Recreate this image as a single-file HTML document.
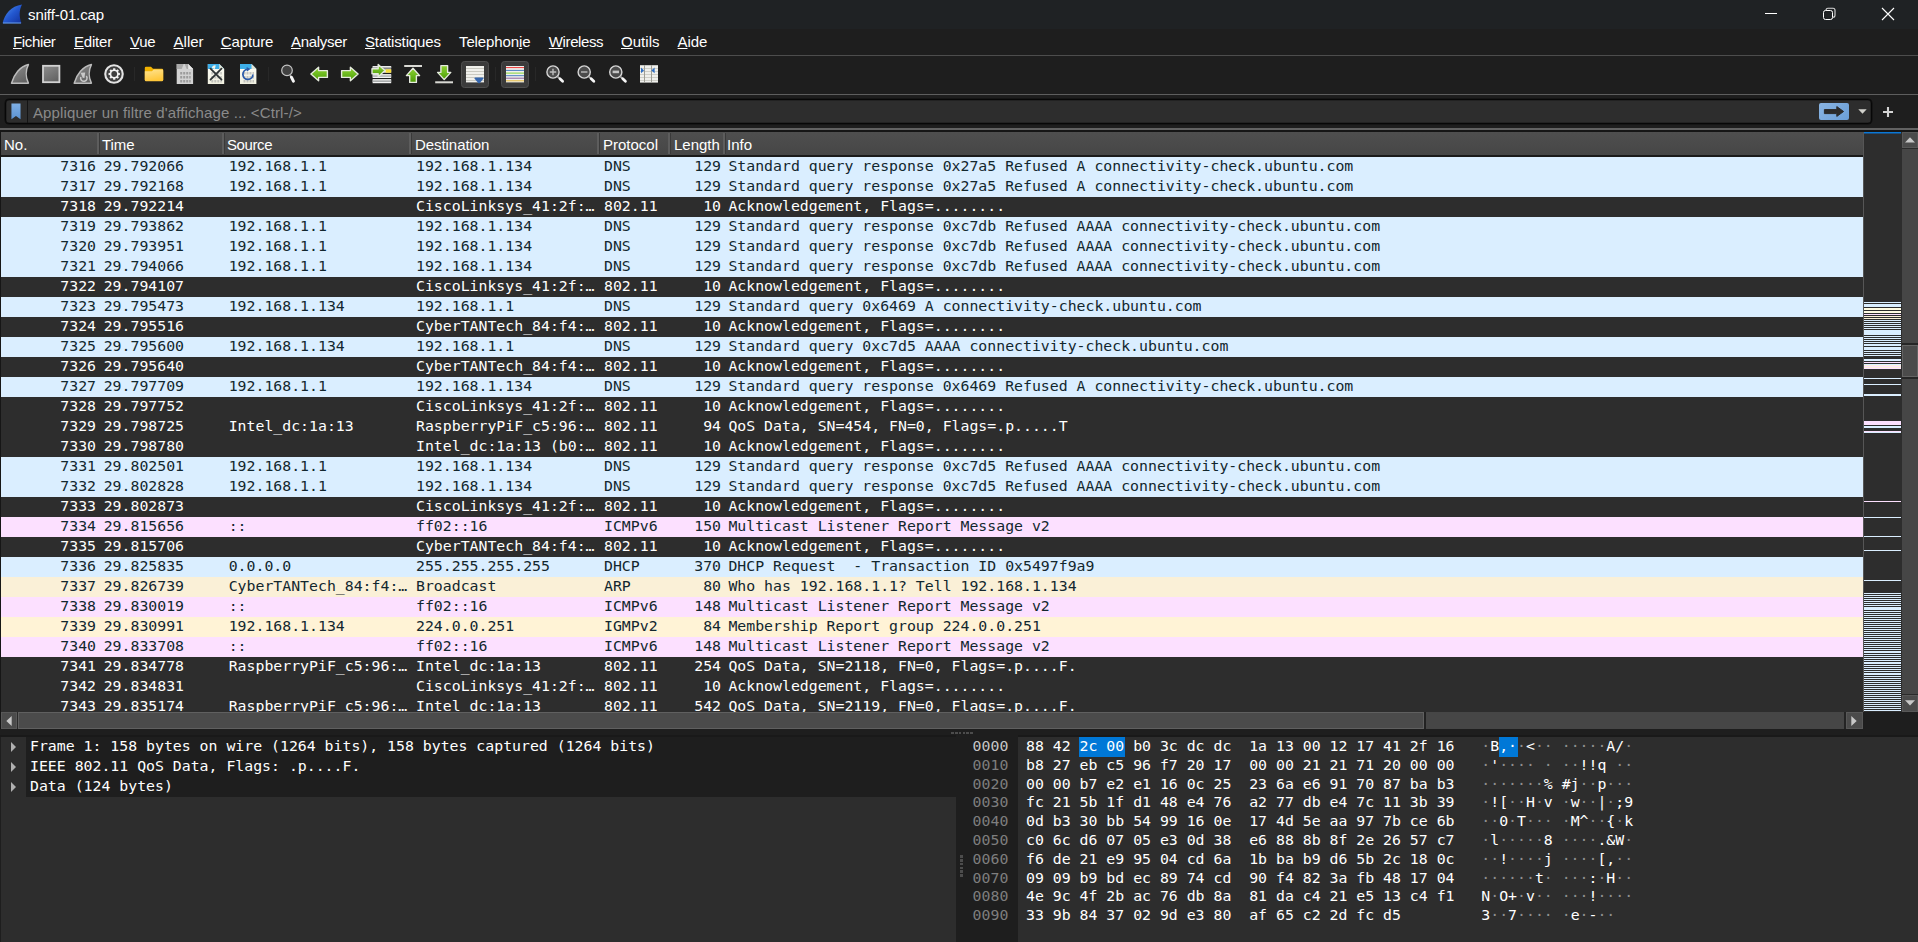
<!DOCTYPE html>
<html lang="fr"><head><meta charset="utf-8"><title>sniff-01.cap</title>
<style>

html,body{margin:0;padding:0;background:#1e1e1e;}
body{width:1918px;height:942px;position:relative;overflow:hidden;font-family:"Liberation Sans", "DejaVu Sans", sans-serif;color:#fff;}
.a{position:absolute;}
.m{font-family:"DejaVu Sans Mono", "Liberation Mono", monospace;font-size:14.83px;white-space:pre;letter-spacing:0;}
.s{font-family:"Liberation Sans", "DejaVu Sans", sans-serif;white-space:pre;}
#title{left:0;top:0;width:1918px;height:29px;background:#1f2224;}
#menubar{left:0;top:29px;width:1918px;height:26px;background:#1e1e1e;}
.mi{position:absolute;top:32px;font-size:15px;line-height:20px;color:#fff;white-space:pre;}
.mi u{text-decoration:underline;text-underline-offset:1px;text-decoration-thickness:1px;}
.hl{position:absolute;left:0;width:1918px;height:1px;}
#hdr{left:1px;top:132px;width:1862px;height:23px;background:linear-gradient(#4f4f4f,#464646);}
.hc{position:absolute;top:136px;font-size:15px;line-height:18px;color:#fff;white-space:pre;}
.hs{position:absolute;top:133px;width:2px;height:21px;background:#5d5d5d;border-right:1px solid #3a3a3a;}
.row{position:absolute;left:0;width:1862px;height:20px;}
.row span{position:absolute;top:-1px;line-height:20px;height:20px;}
.c0{left:0;width:95px;text-align:right;}
.c1{left:102.7px;}
.c2{left:227.7px;}
.c3{left:415px;}
.c4{left:603px;}
.c5{left:669px;width:51px;text-align:right;}
.c6{left:727.4px;}
.tr{position:absolute;left:30px;line-height:20px;height:20px;color:#fff;}
.tri{position:absolute;left:11px;width:0;height:0;border-left:5px solid #b0b0b0;border-top:5px solid transparent;border-bottom:5px solid transparent;}
.hx{position:absolute;left:1026px;line-height:18.8px;height:19px;color:#fff;}
.ho{position:absolute;left:972.6px;line-height:18.8px;height:19px;color:#7e7e7e;}
.dim{color:#8f8f8f;}

</style></head><body>
<div class="a" id="title"></div>
<svg class="a" style="left:2px;top:3px" width="22" height="22" viewBox="0 0 22 22"><defs><linearGradient id="fin" x1="0" y1="0" x2="1" y2="1"><stop offset="0" stop-color="#5b9df0"/><stop offset="0.5" stop-color="#2358d0"/><stop offset="1" stop-color="#12309a"/></linearGradient></defs><path d="M0.6 20.2 C2.6 11 9 3 20 1.4 C17 7 17 14 19.6 20.2 Z" fill="url(#fin)"/><path d="M1 20 L19 20" stroke="#6aa2ee" stroke-width="1"/></svg>
<div class="a s" style="left:28px;top:4.5px;font-size:15px;line-height:20px;letter-spacing:-0.1px;color:#fff;">sniff-01.cap</div>
<svg class="a" style="left:1750px;top:0" width="168" height="29" viewBox="0 0 168 29"><path d="M15 13.5 H27" stroke="#fff" stroke-width="1"/><rect x="73.5" y="10.5" width="9" height="9" rx="2" fill="none" stroke="#fff" stroke-width="1"/><path d="M76 10.5 V10.2 Q76 8.2 78 8.2 H83 Q85 8.2 85 10.2 V15.2 Q85 17.2 83 17.2 H82.5" fill="none" stroke="#d8d8d8" stroke-width="1.1"/><path d="M132 8 L144 20 M144 8 L132 20" stroke="#fff" stroke-width="1.1"/></svg>
<div class="a" id="menubar"></div>
<div class="mi" style="left:13px;letter-spacing:-0.36px"><u>F</u>ichier</div>
<div class="mi" style="left:74px;letter-spacing:-0.21px"><u>E</u>diter</div>
<div class="mi" style="left:130px;letter-spacing:-0.25px"><u>V</u>ue</div>
<div class="mi" style="left:173.5px;letter-spacing:0.02px"><u>A</u>ller</div>
<div class="mi" style="left:220.7px;letter-spacing:-0.11px"><u>C</u>apture</div>
<div class="mi" style="left:291px;letter-spacing:-0.31px"><u>A</u>nalyser</div>
<div class="mi" style="left:365px;letter-spacing:-0.15px"><u>S</u>tatistiques</div>
<div class="mi" style="left:459px;letter-spacing:-0.12px">Telephon<u>i</u>e</div>
<div class="mi" style="left:548.8px;letter-spacing:-0.39px"><u>W</u>ireless</div>
<div class="mi" style="left:621px;letter-spacing:0.04px"><u>O</u>utils</div>
<div class="mi" style="left:677.6px;letter-spacing:-0.11px"><u>A</u>ide</div>
<div class="hl" style="top:55px;background:#4d4d4d"></div>
<svg class="a" style="left:0;top:56px" width="700" height="38" viewBox="0 0 700 38">
<defs>
<linearGradient id="gG" x1="0" y1="0" x2="0.6" y2="1"><stop offset="0" stop-color="#8e8e8e"/><stop offset="1" stop-color="#646464"/></linearGradient>
<linearGradient id="gGreen" x1="0" y1="0" x2="0" y2="1"><stop offset="0" stop-color="#8fd032"/><stop offset="0.5" stop-color="#6cba1e"/><stop offset="1" stop-color="#4e9a06"/></linearGradient>
<linearGradient id="gFold" x1="0" y1="0" x2="0.3" y2="1"><stop offset="0" stop-color="#ffe391"/><stop offset="1" stop-color="#ffc73a"/></linearGradient>
<linearGradient id="gDoc" x1="0" y1="0" x2="0" y2="1"><stop offset="0" stop-color="#fefef8"/><stop offset="1" stop-color="#f0f0e0"/></linearGradient>
<g id="lens"><circle cx="0" cy="0" r="6.1" fill="#4b4b4b" stroke="#d6d6d6" stroke-width="1.4"/><path d="M4.4 4.4 L7 6.8" stroke="#a8a8a8" stroke-width="1.8"/><path d="M7 6.8 L9.6 9.2" stroke="#f6f6f6" stroke-width="2.8" stroke-linecap="round"/></g>
<g id="grid" fill="#9c9c9c"><rect x="3.5" y="8" width="2" height="2.5"/><rect x="6.5" y="8" width="2" height="2.5"/><rect x="9.5" y="8" width="2" height="2.5"/><rect x="12.5" y="8" width="1.5" height="2.5"/>
<rect x="3.5" y="12" width="2" height="2.5"/><rect x="6.5" y="12" width="2" height="2.5"/><rect x="9.5" y="12" width="2" height="2.5"/><rect x="12.5" y="12" width="1.5" height="2.5"/>
<rect x="3.5" y="16" width="2" height="2.5"/><rect x="6.5" y="16" width="2" height="2.5"/><rect x="9.5" y="16" width="2" height="2.5"/><rect x="12.5" y="16" width="1.5" height="2.5"/></g>
</defs>
<!-- start capture fin -->
<path d="M11.5 27.2 C14 18.5 20 10.5 28.4 8.6 C25.6 14 25.6 21.5 28.4 27.2 Z" fill="url(#gG)" stroke="#bcbcbc" stroke-width="1.5" stroke-linejoin="round"/>
<!-- stop square -->
<rect x="43" y="9.8" width="16.4" height="16.4" fill="url(#gG)" stroke="#d2d2d2" stroke-width="1.8"/>
<!-- restart fin -->
<path d="M74.2 27.2 C76.7 18.5 82.7 10.5 91.4 8.6 C88.6 14 88.6 21.5 91.4 27.2 Z" fill="url(#gG)" stroke="#bcbcbc" stroke-width="1.5" stroke-linejoin="round"/>
<path d="M86.3 20.1 A3.2 3.2 0 1 1 80.84 21.06" fill="none" stroke="#c9c9c9" stroke-width="1.5"/>
<path d="M80.6 16.8 L85.2 16.6 L84.4 22 L82.7 21.8 Z" fill="#c9c9c9"/>
<!-- options gear -->
<circle cx="114" cy="18" r="8.75" fill="#3e3e3e" stroke="#e4e4e4" stroke-width="2.1"/>
<g transform="translate(114.2 18)" fill="#f2f2f2">
<circle r="4.5"/>
<g id="teeth"><rect x="-1.1" y="-5.7" width="2.2" height="11.4"/><rect x="-5.7" y="-1.1" width="11.4" height="2.2"/></g>
<use href="#teeth" transform="rotate(45)"/>
<circle r="2.9" fill="#3e3e3e"/>
</g>
<!-- separators -->
<g stroke="#282828" stroke-width="1"><path d="M134.5 11 V25"/><path d="M268.5 11 V25"/><path d="M495.5 11 V25"/><path d="M535.5 11 V25"/></g>
<!-- folder -->
<path d="M144.8 12 Q144.8 10.8 146 10.8 H151 L153 12.8 H162 Q163.2 12.8 163.2 14 V24 H144.8 Z" fill="#f2b200"/>
<path d="M144.8 15.2 H152 L153.6 13.6 H162 Q163.2 13.6 163.2 14.8 V24 Q163.2 25.2 162 25.2 H146 Q144.8 25.2 144.8 24 Z" fill="url(#gFold)"/>
<!-- gray document -->
<g transform="translate(176.7 8)">
<path d="M0 0 H11.5 L16.4 4.9 V20 H0 Z" fill="#d2d2d2"/>
<path d="M0 0 H7 L5 5 H0 Z" fill="#a9a9a9"/><path d="M8 0 H11.5 L16.4 4.9 H10 Z" fill="#a9a9a9"/>
<path d="M11.5 0 L16.4 4.9 H11.5 Z" fill="#e8e8e8"/>
<use href="#grid"/>
</g>
<!-- document close -->
<g transform="translate(207.8 8)">
<path d="M0 0 H11.5 L16.4 4.9 V20 H0 Z" fill="url(#gDoc)"/>
<path d="M0 0 H11.5 L16.4 4.9 H0 Z" fill="#3daee9"/>
<path d="M11.5 0 L16.4 4.9 H11.5 Z" fill="#e4e4d4"/>
<path d="M4 4 A3 3 0 0 1 8 1.5 L7 5 Z" fill="#f4f4e8"/>
<g opacity="0.55"><use href="#grid"/></g>
<path d="M2.7 4.6 L13.7 15.6 M13.7 4.6 L2.7 15.6" stroke="#2e3436" stroke-width="1.8" stroke-linecap="round"/>
</g>
<!-- document reload -->
<g transform="translate(240 8)">
<path d="M0 0 H11.5 L16.4 4.9 V20 H0 Z" fill="url(#gDoc)"/>
<path d="M0 0 H11.5 L16.4 4.9 H0 Z" fill="#3daee9"/>
<path d="M11.5 0 L16.4 4.9 H11.5 Z" fill="#e4e4d4"/>
<g opacity="0.55"><use href="#grid"/></g>
<path d="M7.6 5.4 A5 5 0 1 0 12.9 10.4" fill="none" stroke="#2a5aa8" stroke-width="1.8"/>
<path d="M6.6 3 L10.4 5 L7 7.4 Z" fill="#2a5aa8"/>
</g>
<!-- find -->
<circle cx="287" cy="14.4" r="5.3" fill="#414141" stroke="#c6c6c6" stroke-width="1.2"/>
<path d="M290 19 L291.4 21.4" stroke="#9a9a9a" stroke-width="1.6"/><path d="M291.4 21.2 L293.4 25.2" stroke="#f6f6f6" stroke-width="3" stroke-linecap="round"/>
<!-- back arrow -->
<path d="M310.9 18 L318.6 11.2 V14.6 H327.4 V21.4 H318.6 V24.8 Z" fill="url(#gGreen)" stroke="#e6ebde" stroke-width="1.4" stroke-linejoin="round"/>
<!-- forward arrow -->
<path d="M358.1 18 L350.4 11.2 V14.6 H341.6 V21.4 H350.4 V24.8 Z" fill="url(#gGreen)" stroke="#e6ebde" stroke-width="1.4" stroke-linejoin="round"/>
<!-- go to packet -->
<g>
<g fill="#f4f4f4"><rect x="372.6" y="10" width="18.6" height="2.5"/><rect x="372.6" y="13.3" width="18.6" height="3.4"/><rect x="372.6" y="18.1" width="18.6" height="3.9"/><rect x="372.6" y="23.1" width="18.6" height="4.1"/></g>
<g fill="#a2a6a6"><rect x="372.6" y="10.9" width="18.6" height="0.9"/><rect x="372.6" y="19.4" width="18.6" height="1.3"/><rect x="372.6" y="24.4" width="18.6" height="1.5"/></g>
<rect x="385.6" y="13.3" width="5.6" height="3.4" fill="#f7dc3a"/>
<path d="M372 12.7 H378.2 V8.5 L384.9 14.6 L378.2 20.7 V17.7 H372 Z" fill="url(#gGreen)" stroke="#e4e9dc" stroke-width="1.4" stroke-linejoin="round"/>
</g>
<!-- first packet -->
<rect x="404.2" y="9" width="17.8" height="2" fill="#d9d9d4"/>
<path d="M413 12.2 L419.6 19.6 H416.4 V26.4 H409.7 V19.6 H406.4 Z" fill="url(#gGreen)" stroke="#e6ebde" stroke-width="1.4" stroke-linejoin="round"/>
<!-- last packet -->
<path d="M444.2 23.6 L450.8 16.4 H447.6 V9.6 H440.9 V16.4 H437.6 Z" fill="url(#gGreen)" stroke="#e6ebde" stroke-width="1.4" stroke-linejoin="round"/>
<rect x="435.2" y="25.3" width="17.8" height="2" fill="#d9d9d4"/>
<!-- autoscroll (checked) -->
<rect x="461.5" y="5.5" width="27" height="26" rx="3" fill="#3b3b3b" stroke="#4f4f4f" stroke-width="1"/>
<rect x="466" y="10" width="18" height="16.4" fill="#f0f0ec"/>
<g stroke="#c9c9c1" stroke-width="1"><path d="M466 12.5 H484"/><path d="M466 15.5 H484"/><path d="M466 18.5 H484"/><path d="M466 21.5 H484"/><path d="M466 24.5 H484"/></g>
<path d="M474.4 22.4 Q474.4 21.6 475.4 21.6 H482.6 Q483.6 21.6 483.6 22.4 L479.6 27.2 H478.4 Z" fill="#3566ad"/>
<!-- colorize (checked) -->
<rect x="501.5" y="5.5" width="27" height="26" rx="3" fill="#3b3b3b" stroke="#4f4f4f" stroke-width="1"/>
<rect x="506" y="10" width="18" height="16.4" fill="#f0f0ec"/>
<g stroke-width="1"><path d="M506 11.6 H524" stroke="#ef3a3a"/><path d="M506 14.4 H524" stroke="#4a7fc0"/><path d="M506 17.1 H524" stroke="#82d53a"/><path d="M506 19.7 H524" stroke="#4a7fc0"/><path d="M506 22.2 H524" stroke="#8a62a0"/><path d="M506 24.8 H524" stroke="#e6b93c"/></g>
<!-- zoom in -->
<use href="#lens" x="553" y="16"/>
<path d="M549.8 16 H556.2 M553 12.8 V19.2" stroke="#bdbdbd" stroke-width="1.4"/>
<!-- zoom out -->
<use href="#lens" x="584.2" y="16"/>
<path d="M581 16 H587.4" stroke="#bdbdbd" stroke-width="1.4"/>
<!-- zoom 1:1 -->
<use href="#lens" x="615.8" y="16"/>
<rect x="612.6" y="14.6" width="6.4" height="2.6" fill="#c4c4c4"/>
<!-- resize columns -->
<rect x="640" y="9.2" width="18" height="17.4" fill="#f0f0ec"/>
<g stroke="#cfcfc8" stroke-width="1"><path d="M640 12.5 H658"/><path d="M640 15.5 H658"/><path d="M640 18.5 H658"/><path d="M640 21.5 H658"/><path d="M640 24.5 H658"/></g>
<path d="M644.5 9.2 V26.6 M651.5 9.2 V26.6" stroke="#9e9e96" stroke-width="1"/>
<path d="M641 11.6 L644 14.4 L641 17.2 Z" fill="#2f6fc4"/><path d="M654.6 11.6 L651.4 14.4 L654.6 17.2 Z" fill="#2f6fc4"/>
</svg>

<div class="hl" style="top:94px;background:#5e5e5e"></div>
<div class="a" style="left:5px;top:99px;width:1867px;height:25px;box-sizing:border-box;border:1px solid #070707;border-radius:4px;background:#2d2d2d;box-shadow:0 0 0 0.5px rgba(0,0,0,0.55), inset 0 0 0 0.5px rgba(0,0,0,0.45);"></div>
<div class="a" style="left:27px;top:100px;width:1px;height:23px;background:#141414;"></div>
<svg class="a" style="left:11px;top:103px" width="10.4" height="17.2" viewBox="0 0 12 19" preserveAspectRatio="none"><defs><linearGradient id="bm" x1="0" y1="0" x2="0" y2="1"><stop offset="0" stop-color="#7fb0e6"/><stop offset="1" stop-color="#5b92d2"/></linearGradient></defs><path d="M0.5 0.5 H11 V18 L5.75 14.5 L0.5 18 Z" fill="url(#bm)"/></svg>
<div class="a s" style="left:33px;top:102.5px;font-size:15px;line-height:20px;letter-spacing:0.12px;color:#8a8a8a;">Appliquer un filtre d'affichage ... &lt;Ctrl-/&gt;</div>
<div class="a" style="left:1819px;top:103px;width:30px;height:17px;background:linear-gradient(135deg,#8ab5e3,#6a9ed7);border-radius:2px;"></div>
<svg class="a" style="left:1819px;top:103px" width="30" height="17" viewBox="0 0 30 17"><path d="M5.4 6.6 H17.8 V3.6 L24.6 8.5 L17.8 13.4 V10.6 H5.4 Z" fill="#2b2b2b" stroke="#2b2b2b" stroke-width="1" stroke-linejoin="round"/></svg>
<svg class="a" style="left:1858px;top:109px" width="9" height="5" viewBox="0 0 9 5"><path d="M0.3 0.2 H8.7 L4.5 4.8 Z" fill="#d2d2cc"/></svg>
<svg class="a" style="left:1882px;top:106px" width="12" height="12" viewBox="0 0 12 12"><path d="M6 1 V11 M1 6 H11" stroke="#d4d4d4" stroke-width="2.1"/></svg>
<div class="hl" style="top:128px;height:2px;background:#626262"></div>
<div class="hl" style="top:130px;height:2px;background:#161616"></div>
<div class="a" style="left:0;top:132px;width:1px;height:597px;background:#161616"></div>
<div class="a" id="hdr"></div>
<div class="a" style="left:1px;top:155px;width:1862px;height:2px;background:#1a1a1a"></div>
<div class="hc" style="left:4px;letter-spacing:0px">No.</div>
<div class="hc" style="left:102px;letter-spacing:-0.1px">Time</div>
<div class="hc" style="left:227px;letter-spacing:-0.4px">Source</div>
<div class="hc" style="left:415px;letter-spacing:-0.06px">Destination</div>
<div class="hc" style="left:603px;letter-spacing:0px">Protocol</div>
<div class="hc" style="left:674px;letter-spacing:0px">Length</div>
<div class="hc" style="left:727px;letter-spacing:0px">Info</div>
<div class="hs" style="left:97px"></div>
<div class="hs" style="left:222px"></div>
<div class="hs" style="left:409px"></div>
<div class="hs" style="left:597px"></div>
<div class="hs" style="left:668px"></div>
<div class="hs" style="left:723px"></div>
<div class="a" style="left:1px;top:157px;width:1862px;height:555px;overflow:hidden;background:#2d2d2d">
<div class="row m" style="top:0px;background:#daeeff;color:#12272e"><span class="c0">7316</span><span class="c1">29.792066</span><span class="c2">192.168.1.1</span><span class="c3">192.168.1.134</span><span class="c4">DNS</span><span class="c5">129</span><span class="c6">Standard query response 0x27a5 Refused A connectivity-check.ubuntu.com</span></div>
<div class="row m" style="top:20px;background:#daeeff;color:#12272e"><span class="c0">7317</span><span class="c1">29.792168</span><span class="c2">192.168.1.1</span><span class="c3">192.168.1.134</span><span class="c4">DNS</span><span class="c5">129</span><span class="c6">Standard query response 0x27a5 Refused A connectivity-check.ubuntu.com</span></div>
<div class="row m" style="top:40px;background:#2d2d2d;color:#ffffff"><span class="c0">7318</span><span class="c1">29.792214</span><span class="c2"></span><span class="c3">CiscoLinksys_41:2f:…</span><span class="c4">802.11</span><span class="c5">10</span><span class="c6">Acknowledgement, Flags=........</span></div>
<div class="row m" style="top:60px;background:#daeeff;color:#12272e"><span class="c0">7319</span><span class="c1">29.793862</span><span class="c2">192.168.1.1</span><span class="c3">192.168.1.134</span><span class="c4">DNS</span><span class="c5">129</span><span class="c6">Standard query response 0xc7db Refused AAAA connectivity-check.ubuntu.com</span></div>
<div class="row m" style="top:80px;background:#daeeff;color:#12272e"><span class="c0">7320</span><span class="c1">29.793951</span><span class="c2">192.168.1.1</span><span class="c3">192.168.1.134</span><span class="c4">DNS</span><span class="c5">129</span><span class="c6">Standard query response 0xc7db Refused AAAA connectivity-check.ubuntu.com</span></div>
<div class="row m" style="top:100px;background:#daeeff;color:#12272e"><span class="c0">7321</span><span class="c1">29.794066</span><span class="c2">192.168.1.1</span><span class="c3">192.168.1.134</span><span class="c4">DNS</span><span class="c5">129</span><span class="c6">Standard query response 0xc7db Refused AAAA connectivity-check.ubuntu.com</span></div>
<div class="row m" style="top:120px;background:#2d2d2d;color:#ffffff"><span class="c0">7322</span><span class="c1">29.794107</span><span class="c2"></span><span class="c3">CiscoLinksys_41:2f:…</span><span class="c4">802.11</span><span class="c5">10</span><span class="c6">Acknowledgement, Flags=........</span></div>
<div class="row m" style="top:140px;background:#daeeff;color:#12272e"><span class="c0">7323</span><span class="c1">29.795473</span><span class="c2">192.168.1.134</span><span class="c3">192.168.1.1</span><span class="c4">DNS</span><span class="c5">129</span><span class="c6">Standard query 0x6469 A connectivity-check.ubuntu.com</span></div>
<div class="row m" style="top:160px;background:#2d2d2d;color:#ffffff"><span class="c0">7324</span><span class="c1">29.795516</span><span class="c2"></span><span class="c3">CyberTANTech_84:f4:…</span><span class="c4">802.11</span><span class="c5">10</span><span class="c6">Acknowledgement, Flags=........</span></div>
<div class="row m" style="top:180px;background:#daeeff;color:#12272e"><span class="c0">7325</span><span class="c1">29.795600</span><span class="c2">192.168.1.134</span><span class="c3">192.168.1.1</span><span class="c4">DNS</span><span class="c5">129</span><span class="c6">Standard query 0xc7d5 AAAA connectivity-check.ubuntu.com</span></div>
<div class="row m" style="top:200px;background:#2d2d2d;color:#ffffff"><span class="c0">7326</span><span class="c1">29.795640</span><span class="c2"></span><span class="c3">CyberTANTech_84:f4:…</span><span class="c4">802.11</span><span class="c5">10</span><span class="c6">Acknowledgement, Flags=........</span></div>
<div class="row m" style="top:220px;background:#daeeff;color:#12272e"><span class="c0">7327</span><span class="c1">29.797709</span><span class="c2">192.168.1.1</span><span class="c3">192.168.1.134</span><span class="c4">DNS</span><span class="c5">129</span><span class="c6">Standard query response 0x6469 Refused A connectivity-check.ubuntu.com</span></div>
<div class="row m" style="top:240px;background:#2d2d2d;color:#ffffff"><span class="c0">7328</span><span class="c1">29.797752</span><span class="c2"></span><span class="c3">CiscoLinksys_41:2f:…</span><span class="c4">802.11</span><span class="c5">10</span><span class="c6">Acknowledgement, Flags=........</span></div>
<div class="row m" style="top:260px;background:#2d2d2d;color:#ffffff"><span class="c0">7329</span><span class="c1">29.798725</span><span class="c2">Intel_dc:1a:13</span><span class="c3">RaspberryPiF_c5:96:…</span><span class="c4">802.11</span><span class="c5">94</span><span class="c6">QoS Data, SN=454, FN=0, Flags=.p.....T</span></div>
<div class="row m" style="top:280px;background:#2d2d2d;color:#ffffff"><span class="c0">7330</span><span class="c1">29.798780</span><span class="c2"></span><span class="c3">Intel_dc:1a:13 (b0:…</span><span class="c4">802.11</span><span class="c5">10</span><span class="c6">Acknowledgement, Flags=........</span></div>
<div class="row m" style="top:300px;background:#daeeff;color:#12272e"><span class="c0">7331</span><span class="c1">29.802501</span><span class="c2">192.168.1.1</span><span class="c3">192.168.1.134</span><span class="c4">DNS</span><span class="c5">129</span><span class="c6">Standard query response 0xc7d5 Refused AAAA connectivity-check.ubuntu.com</span></div>
<div class="row m" style="top:320px;background:#daeeff;color:#12272e"><span class="c0">7332</span><span class="c1">29.802828</span><span class="c2">192.168.1.1</span><span class="c3">192.168.1.134</span><span class="c4">DNS</span><span class="c5">129</span><span class="c6">Standard query response 0xc7d5 Refused AAAA connectivity-check.ubuntu.com</span></div>
<div class="row m" style="top:340px;background:#2d2d2d;color:#ffffff"><span class="c0">7333</span><span class="c1">29.802873</span><span class="c2"></span><span class="c3">CiscoLinksys_41:2f:…</span><span class="c4">802.11</span><span class="c5">10</span><span class="c6">Acknowledgement, Flags=........</span></div>
<div class="row m" style="top:360px;background:#fce0ff;color:#12272e"><span class="c0">7334</span><span class="c1">29.815656</span><span class="c2">::</span><span class="c3">ff02::16</span><span class="c4">ICMPv6</span><span class="c5">150</span><span class="c6">Multicast Listener Report Message v2</span></div>
<div class="row m" style="top:380px;background:#2d2d2d;color:#ffffff"><span class="c0">7335</span><span class="c1">29.815706</span><span class="c2"></span><span class="c3">CyberTANTech_84:f4:…</span><span class="c4">802.11</span><span class="c5">10</span><span class="c6">Acknowledgement, Flags=........</span></div>
<div class="row m" style="top:400px;background:#daeeff;color:#12272e"><span class="c0">7336</span><span class="c1">29.825835</span><span class="c2">0.0.0.0</span><span class="c3">255.255.255.255</span><span class="c4">DHCP</span><span class="c5">370</span><span class="c6">DHCP Request  - Transaction ID 0x5497f9a9</span></div>
<div class="row m" style="top:420px;background:#faf0d7;color:#12272e"><span class="c0">7337</span><span class="c1">29.826739</span><span class="c2">CyberTANTech_84:f4:…</span><span class="c3">Broadcast</span><span class="c4">ARP</span><span class="c5">80</span><span class="c6">Who has 192.168.1.1? Tell 192.168.1.134</span></div>
<div class="row m" style="top:440px;background:#fce0ff;color:#12272e"><span class="c0">7338</span><span class="c1">29.830019</span><span class="c2">::</span><span class="c3">ff02::16</span><span class="c4">ICMPv6</span><span class="c5">148</span><span class="c6">Multicast Listener Report Message v2</span></div>
<div class="row m" style="top:460px;background:#fff3d6;color:#12272e"><span class="c0">7339</span><span class="c1">29.830991</span><span class="c2">192.168.1.134</span><span class="c3">224.0.0.251</span><span class="c4">IGMPv2</span><span class="c5">84</span><span class="c6">Membership Report group 224.0.0.251</span></div>
<div class="row m" style="top:480px;background:#fce0ff;color:#12272e"><span class="c0">7340</span><span class="c1">29.833708</span><span class="c2">::</span><span class="c3">ff02::16</span><span class="c4">ICMPv6</span><span class="c5">148</span><span class="c6">Multicast Listener Report Message v2</span></div>
<div class="row m" style="top:500px;background:#2d2d2d;color:#ffffff"><span class="c0">7341</span><span class="c1">29.834778</span><span class="c2">RaspberryPiF_c5:96:…</span><span class="c3">Intel_dc:1a:13</span><span class="c4">802.11</span><span class="c5">254</span><span class="c6">QoS Data, SN=2118, FN=0, Flags=.p....F.</span></div>
<div class="row m" style="top:520px;background:#2d2d2d;color:#ffffff"><span class="c0">7342</span><span class="c1">29.834831</span><span class="c2"></span><span class="c3">CiscoLinksys_41:2f:…</span><span class="c4">802.11</span><span class="c5">10</span><span class="c6">Acknowledgement, Flags=........</span></div>
<div class="row m" style="top:540px;background:#2d2d2d;color:#ffffff"><span class="c0">7343</span><span class="c1">29.835174</span><span class="c2">RaspberryPiF_c5:96:…</span><span class="c3">Intel_dc:1a:13</span><span class="c4">802.11</span><span class="c5">542</span><span class="c6">QoS Data, SN=2119, FN=0, Flags=.p....F.</span></div>
</div>
<div class="a" style="left:1863px;top:132px;width:1px;height:580px;background:#565656"></div>
<div class="a" style="left:1864px;top:132px;width:38px;height:580px;background:#2d2d2d"></div>
<div class="a" style="left:1864px;top:132px;width:37px;height:1px;background:#0a78d6"></div><div class="a" style="left:1864px;top:133px;width:37px;height:1px;background:#1b4f80"></div>
<svg class="a" style="left:1864px;top:132px" width="37" height="580" shape-rendering="crispEdges">
<rect x="0" y="170" width="37" height="1" fill="#daeeff"/>
<rect x="0" y="172" width="37" height="3" fill="#daeeff"/>
<rect x="0" y="176" width="37" height="2" fill="#fffbe2"/>
<rect x="0" y="179" width="37" height="2" fill="#fffbe2"/>
<rect x="0" y="182" width="37" height="1" fill="#fce0ff"/>
<rect x="0" y="184" width="37" height="1" fill="#faf0d7"/>
<rect x="0" y="186" width="37" height="1" fill="#faf0d7"/>
<rect x="0" y="188" width="37" height="1" fill="#daeeff"/>
<rect x="0" y="190" width="37" height="1" fill="#daeeff"/>
<rect x="0" y="192" width="37" height="1" fill="#daeeff"/>
<rect x="0" y="194" width="37" height="1" fill="#daeeff"/>
<rect x="0" y="196" width="37" height="1" fill="#daeeff"/>
<rect x="0" y="198" width="37" height="5" fill="#daeeff"/>
<rect x="0" y="204" width="37" height="1" fill="#daeeff"/>
<rect x="0" y="206" width="37" height="1" fill="#daeeff"/>
<rect x="0" y="208" width="37" height="1" fill="#daeeff"/>
<rect x="0" y="210" width="37" height="1" fill="#daeeff"/>
<rect x="0" y="212" width="37" height="2" fill="#daeeff"/>
<rect x="0" y="215" width="37" height="3" fill="#daeeff"/>
<rect x="0" y="219" width="37" height="1" fill="#daeeff"/>
<rect x="0" y="221" width="37" height="1" fill="#daeeff"/>
<rect x="0" y="223" width="37" height="1" fill="#daeeff"/>
<rect x="0" y="227" width="37" height="2" fill="#daeeff"/>
<rect x="0" y="230" width="37" height="1" fill="#fce0ff"/>
<rect x="0" y="232" width="37" height="1" fill="#daeeff"/>
<rect x="0" y="233" width="37" height="1" fill="#faf0d7"/>
<rect x="0" y="234" width="37" height="1" fill="#fce0ff"/>
<rect x="0" y="235" width="37" height="1" fill="#faf0d7"/>
<rect x="0" y="236" width="37" height="1" fill="#fce0ff"/>
<rect x="0" y="246" width="37" height="1" fill="#daeeff"/>
<rect x="0" y="252" width="37" height="1" fill="#daeeff"/>
<rect x="0" y="262" width="37" height="2" fill="#daeeff"/>
<rect x="0" y="289" width="37" height="4" fill="#fce0ff"/>
<rect x="0" y="294" width="37" height="2" fill="#daeeff"/>
<rect x="0" y="299" width="37" height="1" fill="#fce0ff"/>
<rect x="0" y="300" width="37" height="1" fill="#daeeff"/>
<rect x="0" y="369" width="37" height="1" fill="#fce0ff"/>
<rect x="0" y="385" width="37" height="1" fill="#daeeff"/>
<rect x="0" y="404" width="37" height="1" fill="#daeeff"/>
<rect x="0" y="418" width="37" height="1" fill="#daeeff"/>
<rect x="0" y="448" width="37" height="1" fill="#daeeff"/>
<rect x="0" y="461" width="37" height="1" fill="#daeeff"/>
<rect x="0" y="463" width="37" height="1" fill="#daeeff"/>
<rect x="0" y="465" width="37" height="1" fill="#daeeff"/>
<rect x="0" y="467" width="37" height="1" fill="#daeeff"/>
<rect x="0" y="469" width="37" height="1" fill="#daeeff"/>
<rect x="0" y="471" width="37" height="1" fill="#daeeff"/>
<rect x="0" y="473" width="37" height="1" fill="#daeeff"/>
<rect x="0" y="475" width="37" height="3" fill="#daeeff"/>
<rect x="0" y="479" width="37" height="1" fill="#daeeff"/>
<rect x="0" y="481" width="37" height="1" fill="#daeeff"/>
<rect x="0" y="483" width="37" height="1" fill="#daeeff"/>
<rect x="0" y="485" width="37" height="1" fill="#daeeff"/>
<rect x="0" y="487" width="37" height="1" fill="#daeeff"/>
<rect x="0" y="489" width="37" height="1" fill="#daeeff"/>
<rect x="0" y="491" width="37" height="1" fill="#daeeff"/>
<rect x="0" y="493" width="37" height="1" fill="#daeeff"/>
<rect x="0" y="495" width="37" height="1" fill="#daeeff"/>
<rect x="0" y="497" width="37" height="1" fill="#daeeff"/>
<rect x="0" y="499" width="37" height="1" fill="#daeeff"/>
<rect x="0" y="501" width="37" height="1" fill="#daeeff"/>
<rect x="0" y="503" width="37" height="1" fill="#daeeff"/>
<rect x="0" y="505" width="37" height="1" fill="#daeeff"/>
<rect x="0" y="507" width="37" height="1" fill="#daeeff"/>
<rect x="0" y="509" width="37" height="1" fill="#daeeff"/>
<rect x="0" y="511" width="37" height="1" fill="#daeeff"/>
<rect x="0" y="513" width="37" height="1" fill="#daeeff"/>
<rect x="0" y="515" width="37" height="1" fill="#daeeff"/>
<rect x="0" y="517" width="37" height="1" fill="#daeeff"/>
<rect x="0" y="519" width="37" height="2" fill="#daeeff"/>
<rect x="0" y="522" width="37" height="1" fill="#daeeff"/>
<rect x="0" y="524" width="37" height="1" fill="#daeeff"/>
<rect x="0" y="526" width="37" height="1" fill="#daeeff"/>
<rect x="0" y="528" width="37" height="1" fill="#daeeff"/>
<rect x="0" y="530" width="37" height="2" fill="#daeeff"/>
<rect x="0" y="533" width="37" height="1" fill="#daeeff"/>
<rect x="0" y="535" width="37" height="1" fill="#daeeff"/>
<rect x="0" y="537" width="37" height="1" fill="#daeeff"/>
<rect x="0" y="539" width="37" height="1" fill="#daeeff"/>
<rect x="0" y="541" width="37" height="2" fill="#daeeff"/>
<rect x="0" y="544" width="37" height="1" fill="#daeeff"/>
<rect x="0" y="546" width="37" height="1" fill="#daeeff"/>
<rect x="0" y="548" width="37" height="1" fill="#daeeff"/>
<rect x="0" y="550" width="37" height="1" fill="#daeeff"/>
<rect x="0" y="552" width="37" height="1" fill="#daeeff"/>
<rect x="0" y="554" width="37" height="1" fill="#daeeff"/>
<rect x="0" y="556" width="37" height="1" fill="#daeeff"/>
<rect x="0" y="558" width="37" height="1" fill="#daeeff"/>
<rect x="0" y="560" width="37" height="1" fill="#daeeff"/>
<rect x="0" y="562" width="37" height="1" fill="#daeeff"/>
<rect x="0" y="564" width="37" height="1" fill="#daeeff"/>
<rect x="0" y="566" width="37" height="1" fill="#daeeff"/>
<rect x="0" y="568" width="37" height="1" fill="#daeeff"/>
<rect x="0" y="570" width="37" height="1" fill="#daeeff"/>
<rect x="0" y="572" width="37" height="1" fill="#daeeff"/>
<rect x="0" y="574" width="37" height="1" fill="#daeeff"/>
<rect x="0" y="576" width="37" height="1" fill="#daeeff"/>
<rect x="0" y="578" width="37" height="1" fill="#daeeff"/>
</svg>
<div class="a" style="left:1902px;top:132px;width:16px;height:580px;background:#464646"></div>
<div class="a" style="left:1902px;top:132px;width:16px;height:16px;box-sizing:border-box;background:#4b4b4b;border:1px solid #585858"></div>
<div class="a" style="left:1902px;top:148px;width:16px;height:1px;background:#2a2a2a"></div>
<svg class="a" style="left:1905px;top:137px" width="10" height="6"><path d="M0 5.5 L5 0.3 L10 5.5 Z" fill="#c8c8c8"/></svg>
<div class="a" style="left:1902px;top:345px;width:16px;height:32px;box-sizing:border-box;background:#4b4b4b;border:1px solid #646464"></div>
<div class="a" style="left:1902px;top:343px;width:16px;height:2px;background:#262626"></div>
<div class="a" style="left:1902px;top:377px;width:16px;height:2px;background:#262626"></div>
<div class="a" style="left:1902px;top:694px;width:16px;height:1px;background:#2a2a2a"></div>
<div class="a" style="left:1902px;top:695px;width:16px;height:17px;box-sizing:border-box;background:#4b4b4b;border:1px solid #585858"></div>
<svg class="a" style="left:1905px;top:700px" width="10" height="6"><path d="M0 0.3 L10 0.3 L5 5.5 Z" fill="#c8c8c8"/></svg>
<div class="a" style="left:1px;top:712px;width:1862px;height:17px;background:#464646"></div>
<div class="a" style="left:1px;top:712px;width:16px;height:17px;box-sizing:border-box;background:#4b4b4b;border:1px solid #585858"></div>
<svg class="a" style="left:5.5px;top:716px" width="6" height="10"><path d="M5.7 0 L0.3 5 L5.7 10 Z" fill="#c8c8c8"/></svg>
<div class="a" style="left:18px;top:712px;width:1406px;height:17px;box-sizing:border-box;background:#4b4b4b;border:1px solid #606060"></div>
<div class="a" style="left:17px;top:712px;width:1px;height:17px;background:#2a2a2a"></div>
<div class="a" style="left:1424px;top:712px;width:2px;height:17px;background:#222"></div>
<div class="a" style="left:1846px;top:712px;width:17px;height:17px;box-sizing:border-box;background:#4b4b4b;border:1px solid #585858"></div>
<div class="a" style="left:1844px;top:712px;width:2px;height:17px;background:#242424"></div>
<svg class="a" style="left:1851px;top:716px" width="6" height="10"><path d="M0.3 0 L5.7 5 L0.3 10 Z" fill="#c8c8c8"/></svg>
<div class="a" style="left:0;top:729px;width:1918px;height:8px;background:#1e1e1e"></div>
<svg class="a" style="left:951px;top:732px" width="23" height="2" shape-rendering="crispEdges"><g fill="#4c4c4c"><rect x="0" y="0" width="3" height="2"/><rect x="4" y="0" width="3" height="2"/><rect x="8" y="0" width="2" height="2"/><rect x="12" y="0" width="2" height="2"/><rect x="15" y="0" width="3" height="2"/><rect x="19" y="0" width="3" height="2"/></g></svg>
<div class="a" style="left:0;top:735px;width:1918px;height:2px;background:#191919"></div>
<div class="a" style="left:1px;top:737px;width:955px;height:205px;background:#2d2d2d"></div>
<div class="a" style="left:26px;top:737px;width:930px;height:60px;background:#1e1e1e"></div>
<div class="tri" style="top:742.2px"></div>
<div class="tr m" style="top:736px">Frame 1: 158 bytes on wire (1264 bits), 158 bytes captured (1264 bits)</div>
<div class="tri" style="top:762.2px"></div>
<div class="tr m" style="top:756px">IEEE 802.11 QoS Data, Flags: .p....F.</div>
<div class="tri" style="top:782.2px"></div>
<div class="tr m" style="top:776px">Data (124 bytes)</div>
<div class="a" style="left:956px;top:735px;width:62px;height:207px;background:#1e1e1e"></div>
<svg class="a" style="left:960px;top:855px" width="3" height="23" shape-rendering="crispEdges"><g fill="#4c4c4c"><rect y="0" x="0" height="3" width="3"/><rect y="4" x="0" height="3" width="3"/><rect y="8" x="0" height="2" width="3"/><rect y="12" x="0" height="2" width="3"/><rect y="15" x="0" height="3" width="3"/><rect y="19" x="0" height="3" width="3"/></g></svg>
<div class="a" style="left:1018px;top:737px;width:900px;height:205px;background:#2d2d2d"></div>
<div class="a" style="left:1079px;top:737px;width:46px;height:20px;background:#0078d7"></div>
<div class="a" style="left:1499px;top:737px;width:19px;height:20px;background:#0078d7"></div>
<div class="ho m" style="top:737.0px;color:#c6c6c6;">0000</div>
<div class="hx m" style="top:737.0px">88 42 2c 00 b0 3c dc dc  1a 13 00 12 17 41 2f 16   <span class="dim">·</span>B,·<span class="dim">·</span>&lt;<span class="dim">··</span> <span class="dim">·····</span>A/<span class="dim">·</span></div>
<div class="ho m" style="top:755.8px;">0010</div>
<div class="hx m" style="top:755.8px">b8 27 eb c5 96 f7 20 17  00 00 21 21 71 20 00 00   <span class="dim">·</span>&#x27;<span class="dim">····</span> <span class="dim">·</span> <span class="dim">··</span>!!q <span class="dim">··</span></div>
<div class="ho m" style="top:774.6px;">0020</div>
<div class="hx m" style="top:774.6px">00 00 b7 e2 e1 16 0c 25  23 6a e6 91 70 87 ba b3   <span class="dim">·······</span>% #j<span class="dim">··</span>p<span class="dim">···</span></div>
<div class="ho m" style="top:793.4px;">0030</div>
<div class="hx m" style="top:793.4px">fc 21 5b 1f d1 48 e4 76  a2 77 db e4 7c 11 3b 39   <span class="dim">·</span>![<span class="dim">··</span>H<span class="dim">·</span>v <span class="dim">·</span>w<span class="dim">··</span>|<span class="dim">·</span>;9</div>
<div class="ho m" style="top:812.2px;">0040</div>
<div class="hx m" style="top:812.2px">0d b3 30 bb 54 99 16 0e  17 4d 5e aa 97 7b ce 6b   <span class="dim">··</span>0<span class="dim">·</span>T<span class="dim">···</span> <span class="dim">·</span>M^<span class="dim">··</span>{<span class="dim">·</span>k</div>
<div class="ho m" style="top:831.0px;">0050</div>
<div class="hx m" style="top:831.0px">c0 6c d6 07 05 e3 0d 38  e6 88 8b 8f 2e 26 57 c7   <span class="dim">·</span>l<span class="dim">·····</span>8 <span class="dim">····</span>.&amp;W<span class="dim">·</span></div>
<div class="ho m" style="top:849.8px;">0060</div>
<div class="hx m" style="top:849.8px">f6 de 21 e9 95 04 cd 6a  1b ba b9 d6 5b 2c 18 0c   <span class="dim">··</span>!<span class="dim">····</span>j <span class="dim">····</span>[,<span class="dim">··</span></div>
<div class="ho m" style="top:868.6px;">0070</div>
<div class="hx m" style="top:868.6px">09 09 b9 bd ec 89 74 cd  90 f4 82 3a fb 48 17 04   <span class="dim">······</span>t<span class="dim">·</span> <span class="dim">···</span>:<span class="dim">·</span>H<span class="dim">··</span></div>
<div class="ho m" style="top:887.4px;">0080</div>
<div class="hx m" style="top:887.4px">4e 9c 4f 2b ac 76 db 8a  81 da c4 21 e5 13 c4 f1   N<span class="dim">·</span>O+<span class="dim">·</span>v<span class="dim">··</span> <span class="dim">···</span>!<span class="dim">····</span></div>
<div class="ho m" style="top:906.2px;">0090</div>
<div class="hx m" style="top:906.2px">33 9b 84 37 02 9d e3 80  af 65 c2 2d fc d5         3<span class="dim">··</span>7<span class="dim">····</span> <span class="dim">·</span>e<span class="dim">·</span>-<span class="dim">··</span></div>
</body></html>
